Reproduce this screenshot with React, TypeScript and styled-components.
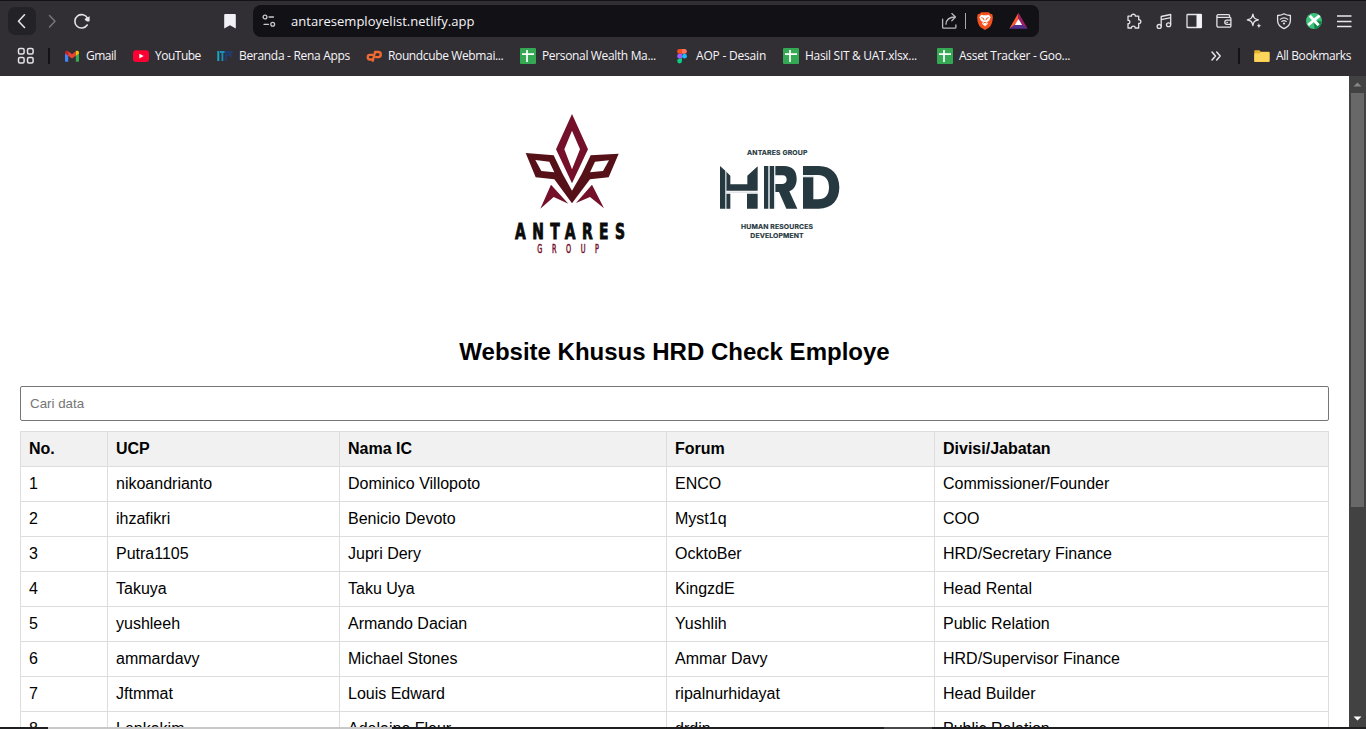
import React from "react";
import styled, { createGlobalStyle } from "styled-components";

const GlobalStyle = createGlobalStyle`
  * { box-sizing: border-box; }
  html, body { margin: 0; padding: 0; overflow: hidden; background: #fff; }
`;

const Window = styled.div`
  width: 1366px;
  height: 729px;
  display: flex;
  flex-direction: column;
  overflow: hidden;
  background: #fff;
  font-family: "Liberation Sans", Arial, sans-serif;
`;

const Chrome = styled.header`
  flex: none;
  height: 76px;
  background: #312f34;
  border-top: 1px solid #131217;
  font-family: "Open Sans", "Noto Sans", sans-serif;
  color: #f6f5f9;
`;

const Toolbar = styled.div`
  display: flex;
  align-items: center;
  height: 40px;
  padding: 0 13px 0 8px;
`;

const NavButton = styled.span<{ $raised?: boolean; $width?: number }>`
  display: flex;
  align-items: center;
  justify-content: center;
  width: ${(p) => p.$width ?? 28}px;
  height: 28px;
  border-radius: 7px;
  background: ${(p) => (p.$raised ? "#232226" : "transparent")};
`;

const BookmarkMark = styled.span`
  display: flex;
  margin-left: 127px;
`;

const AddressBar = styled.div`
  display: flex;
  align-items: center;
  width: 786px;
  height: 32px;
  margin-left: 16px;
  padding: 0 10px 0 8px;
  border-radius: 8px;
  background: #121116;
`;

const Address = styled.span`
  flex: 1;
  margin-left: 14px;
  font-size: 13px;
  line-height: 18px;
  letter-spacing: 0.02px;
  white-space: nowrap;
`;

const AddressDivider = styled.span`
  width: 1px;
  height: 16px;
  margin: 0 10px 0 7px;
  background: #a9a8ad;
`;

const RewardsSlot = styled.span`
  display: flex;
  margin: 0 1px 0 15px;
`;

const Actions = styled.div`
  display: flex;
  gap: 12px;
  margin-left: auto;
`;

const Bookmarks = styled.nav`
  display: flex;
  align-items: center;
  height: 30px;
  padding: 0 14px 0 17px;
`;

const BarDivider = styled.span<{ $left: number; $right: number }>`
  width: 2px;
  height: 16px;
  margin: 0 ${(p) => p.$right}px 0 ${(p) => p.$left}px;
  background: #131217;
`;

const BookmarkList = styled.div`
  display: flex;
  gap: 16px;
`;

const Bookmark = styled.span`
  display: flex;
  align-items: center;
  gap: 6px;
`;

const BookmarkLabel = styled.span<{ $width: number; $track: number }>`
  width: ${(p) => p.$width}px;
  font-size: 12px;
  line-height: 16px;
  letter-spacing: ${(p) => p.$track}px;
  white-space: nowrap;
`;

const Overflow = styled.span`
  display: flex;
  margin-left: auto;
`;

const Viewport = styled.div`
  display: flex;
  flex: none;
  height: 651px;
  overflow: hidden;
`;

const Page = styled.main`
  flex: 1;
  padding: 24px 20px 0;
  overflow: hidden;
`;

const Logos = styled.div`
  display: flex;
  justify-content: center;
  gap: 60px;
  height: 240px;
  padding-left: 11px;
`;

const HrdSlot = styled.div`
  padding-top: 35px;
`;

const Title = styled.h2`
  margin: -2px 0 20px;
  font-size: 24px;
  line-height: 28px;
  font-weight: 700;
  text-align: center;
  color: #000;
`;

const Search = styled.input`
  display: block;
  width: 100%;
  height: 35px;
  margin: 0 0 10px;
  padding: 0 9px;
  border: 1px solid #767676;
  border-radius: 2px;
  font: 13.333px "Liberation Sans", Arial, sans-serif;
  outline: none;
  &::placeholder { color: #757575; }
`;

const Table = styled.table`
  width: 1308px;
  table-layout: fixed;
  border-collapse: collapse;
  font-size: 16px;
  line-height: 18px;
  color: #000;
`;

const Col = styled.col<{ $width: number }>`
  width: ${(p) => p.$width}px;
`;

const HeadCell = styled.th`
  height: 35px;
  padding: 0 8px;
  border: 1px solid #ddd;
  background: #f1f1f1;
  text-align: left;
`;

const Cell = styled.td`
  height: 35px;
  padding: 0 8px;
  border: 1px solid #ddd;
`;

const Scrollbar = styled.div`
  display: flex;
  flex-direction: column;
  align-items: center;
  justify-content: space-between;
  width: 17px;
  background: #424242;
`;

const ScrollArrow = styled.span`
  display: flex;
  align-items: center;
  justify-content: center;
  height: 17px;
`;

const ScrollTrack = styled.div`
  flex: 1;
  width: 13px;
`;

const ScrollThumb = styled.div`
  height: 414px;
  background: #686868;
`;

const Taskbar = styled.footer`
  display: flex;
  height: 2px;
`;

const TaskSegment = styled.span<{ $width: number; $color: string }>`
  width: ${(p) => p.$width}px;
  background: ${(p) => p.$color};
`;

const line = { fill: "none", stroke: "#e4e3e8", strokeWidth: 1.3, strokeLinecap: "round", strokeLinejoin: "round" } as const;

const Sheet = () => (
  <svg width="16" height="16" viewBox="0 0 16 16">
    <rect width="16" height="16" rx="1" fill="#34a853" />
    <path d="M2 6.2h12M7 2v12" stroke="#fff" strokeWidth="1.7" />
  </svg>
);

const Gmail = () => (
  <svg width="16" height="16" viewBox="0 0 16 16">
    <path d="M1 4.5V13a.8.8 0 0 0 .8.8h2.4V7.2Z" fill="#4285f4" />
    <path d="M15 4.5V13a.8.8 0 0 1-.8.8h-2.4V7.2Z" fill="#34a853" />
    <path d="M1 4.6c0-1.8 2-2.4 3.2-1.4v4.5L1 5.4Z" fill="#c5221f" />
    <path d="M4.2 3.2 8 6.2l3.8-3v4.5L8 10.6 4.2 7.7Z" fill="#ea4335" />
    <path d="M15 4.6c0-1.8-2-2.4-3.2-1.4v4.5L15 5.4Z" fill="#fbbc04" />
  </svg>
);

const YouTube = () => (
  <svg width="16" height="16" viewBox="0 0 16 16">
    <rect y="2.3" width="16" height="11.6" rx="3" fill="#ff0033" />
    <path d="m6.3 5.7 4.4 2.4-4.4 2.4Z" fill="#fff" />
  </svg>
);

const Rena = () => (
  <svg width="16" height="16" viewBox="0 0 16 16">
    <path d="M1.3 3v10" stroke="#18a6c4" strokeWidth="2" />
    <path d="M3 4h4.6M5.4 3.500V13" stroke="#1790b8" strokeWidth="1.8" />
    <path d="M8.800 13V4h2c2.400 0 2.400 3.400 0 3.400H9.200M12 4h3.600M13.800 4v5" stroke="#213c72" strokeWidth="1.8" fill="none" />
  </svg>
);

const CPanel = () => (
  <svg width="16" height="16" viewBox="0 0 16 16">
    <path d="M6.600 6.900H4a2.300 2.300 0 0 0 0 4.600h1.500" fill="none" stroke="#f26a32" strokeWidth="2.300" strokeLinecap="round" />
    <path d="M6.800 12.700 9 4h3.200a2.600 2.600 0 0 1 0 5.200H10" fill="none" stroke="#f26a32" strokeWidth="2.300" strokeLinecap="round" strokeLinejoin="round" />
  </svg>
);

const Figma = () => (
  <svg width="16" height="16" viewBox="0 0 16 16">
    <path d="M8 1H5.500a2.400 2.400 0 0 0 0 4.800H8Z" fill="#f24e1e" />
    <path d="M8 1h2.500a2.400 2.400 0 0 1 0 4.800H8Z" fill="#ff7262" />
    <path d="M8 5.800H5.500a2.400 2.400 0 0 0 0 4.800H8Z" fill="#a259ff" />
    <circle cx="10.500" cy="8.200" r="2.400" fill="#1abcfe" />
    <path d="M8 10.600H5.500A2.400 2.400 0 1 0 8 13Z" fill="#0acf83" />
  </svg>
);

const Folder = () => (
  <svg width="16" height="16" viewBox="0 0 16 16">
    <path d="M.3 3.200c0-.7.400-1 1-1h4l1.600 1.500h7.600c.7 0 1 .4 1 1v8.200c0 .7-.4 1-1 1H1.300c-.7 0-1-.4-1-1Z" fill="#e8b32e" />
    <path d="M.3 5.400h5.400l1.500-1.300h7.300c.7 0 1 .4 1 1v7.600c0 .7-.4 1-1 1H1.300c-.7 0-1-.4-1-1Z" fill="#ffd65c" />
  </svg>
);

const bookmarks = [
  { label: "Gmail", width: 31, track: -0.5, icon: <Gmail /> },
  { label: "YouTube", width: 46, track: -0.5, icon: <YouTube /> },
  { label: "Beranda - Rena Apps", width: 111, track: -0.31, icon: <Rena /> },
  { label: "Roundcube Webmai...", width: 116, track: -0.37, icon: <CPanel /> },
  { label: "Personal Wealth Ma...", width: 116, track: -0.35, icon: <Sheet /> },
  { label: "AOP - Desain", width: 71, track: -0.2, icon: <Figma /> },
  { label: "Hasil SIT & UAT.xlsx...", width: 116, track: -0.3, icon: <Sheet /> },
  { label: "Asset Tracker - Goo...", width: 116, track: -0.3, icon: <Sheet /> },
];

const ActionIcons = () => (
  <Actions>
    <svg width="18" height="18" viewBox="0 0 18 18">
      <path {...line} d="M3 4.200h3.500c-.9-2.600 4.600-2.600 3.800 0h3.400v3.600c2.900-.7 2.900 4.300 0 3.600v4.600h-3.600c.5-2.600-4-2.600-3.600 0H3v-4.300c2.500.4 2.500-3.800 0-3.400Z" />
    </svg>
    <svg width="18" height="18" viewBox="0 0 18 18">
      <path {...line} d="M6.200 14V4.500l9.500-2V12M6.200 7.600l9.500-2" />
      <ellipse {...line} cx="4.200" cy="14.400" rx="2.100" ry="1.900" />
      <ellipse {...line} cx="13.600" cy="12.700" rx="2.100" ry="1.900" />
    </svg>
    <svg width="18" height="18" viewBox="0 0 18 18">
      <rect {...line} x="2" y="2.500" width="14.400" height="13" rx=".6" />
      <path d="M11.500 2h5v14h-5Z" fill="#f4f3f8" />
    </svg>
    <svg width="18" height="18" viewBox="0 0 18 18">
      <path {...line} d="M14.600 5.400V3.800c0-.7-.4-1.100-1.100-1.100H3.200c-1.700 0-1.700 2.700 0 2.700h11.400c.8 0 1.300.4 1.300 1.200v7.300c0 .8-.5 1.200-1.300 1.200H3.400c-.9 0-1.500-.5-1.500-1.400V4M15.900 8.200h-4c-2.800 0-2.800 4.200 0 4.200h4M11.800 10.300h.6" />
    </svg>
    <svg width="18" height="18" viewBox="0 0 18 18">
      <path {...line} d="M7.900 2.200c.7 3.800 1.500 4.800 5.500 5.600-4 .8-4.800 1.900-5.500 5.700-.8-3.800-1.700-4.900-5.600-5.700 3.900-.8 4.800-1.800 5.600-5.600Z" />
      <path d="M13.900 11.100c.4 1.900.9 2.300 2.600 2.700-1.700.4-2.200.8-2.600 2.600-.4-1.800-.8-2.200-2.500-2.600 1.700-.4 2.100-.8 2.500-2.700Z" fill="#e4e3e8" />
    </svg>
    <svg width="18" height="18" viewBox="0 0 18 18">
      <path {...line} d="M9 1.800c2 1.200 4 1.600 6.400 1.700v5.100c0 3.800-2.500 6.400-6.400 8.100-3.900-1.700-6.400-4.300-6.400-8.100V3.500C5 3.400 7 3 9 1.800Z" />
      <path {...line} strokeWidth="1.100" d="M5.200 7.400c2.200-1.800 5.400-1.800 7.600 0M6.700 9.500c1.400-1.100 3.200-1.100 4.600 0" />
      <circle cx="9" cy="11.500" r="1.100" fill="#e4e3e8" />
    </svg>
    <svg width="18" height="18" viewBox="0 0 18 18">
      <circle cx="9" cy="9" r="8" fill="#3cc47c" />
      <path d="M9.500 17A8 8 0 0 0 17 9.500L13 8.600 9 12Z" fill="#14864a" />
      <path d="m4.800 3.800 8.800 9.400M14.600 3.600 3.200 13" stroke="#fff" strokeWidth="2.800" />
    </svg>
    <svg width="18" height="18" viewBox="0 0 18 18">
      <path d="M2 4h14.500M2 9.500h14.500M2 14.500h14.500" stroke="#e8e7ec" strokeWidth="1.300" />
    </svg>
  </Actions>
);

const AntaresLogo = () => (
  <svg width="140" height="165" viewBox="0 0 420 495">
    <path fillRule="evenodd" fill="#74102a" d="M216 42 264 148 216 250 168 148ZM216 92 193 148 216 208 240 148Z" />
    <g fill="#551117">
      <path fillRule="evenodd" d="M77 159 161 166 188 222 216 272V310L163 238 107 232ZM106 180 124 213 163 217 148 185Z" />
      <path fillRule="evenodd" d="M356 161 272 166 245 222 216 272V310L270 238 326 232ZM327 181 309 213 270 217 285 185Z" />
    </g>
    <path fill="#74102a" d="M153 254 205 311 161 291 121 326ZM276 254 228 309 270 291 312 325Z" />
    <g fontFamily="DejaVu Sans Condensed, DejaVu Sans, sans-serif">
      <text transform="translate(45 417) scale(.76 1)" textLength="434" lengthAdjust="spacing" fontSize="61" fontWeight="700" fill="#0b0b0b" stroke="#0b0b0b" strokeWidth="2.500">ANTARES</text>
      <text transform="translate(112 459) scale(.62 1)" textLength="298" lengthAdjust="spacing" fontSize="35" fill="#74102a" stroke="#74102a" strokeWidth="1.500">GROUP</text>
    </g>
  </svg>
);

const HrdLogo = () => (
  <svg width="160" height="115" viewBox="0 0 480 345">
    <g fill="#263840" stroke="#263840" strokeWidth=".5" fontFamily="Inter, sans-serif" fontWeight="700" fontSize="20.5">
      <text x="141" y="59" textLength="181">ANTARES GROUP</text>
      <text x="123" y="283" textLength="216">HUMAN RESOURCES</text>
      <text x="151" y="308" textLength="160">DEVELOPMENT</text>
    </g>
    <g fill="#263840">
      <path d="M60 93 76 107V221H60ZM79 110 91 122V148H142V122L173 94V167H79ZM79 176H91V221H79ZM141 176H173V221H141Z" />
      <path d="M192 93H205V221H192ZM209 93H222V221H209Z" />
      <path d="M226 93H252C278 93 290 108 290 132 290 150 282 163 268 169L292 221H259L237 171H226V147H248C264 147 264 121 248 121H226Z" />
      <path d="M309 93H356C396 93 418 119 418 157S396 221 356 221H309V127H340V193H354C377 193 387 179 387 157S377 120 354 120H309Z" />
    </g>
    <path d="M77.500 108V221M207 93V221M224 93V221M79 171.500H173M309 123.500H342" stroke="#b9c2c7" strokeWidth="2" />
  </svg>
);

const columns = [
  { name: "No.", width: 87 },
  { name: "UCP", width: 232 },
  { name: "Nama IC", width: 327 },
  { name: "Forum", width: 268 },
  { name: "Divisi/Jabatan", width: 394 },
];

const employees = [
  ["1", "nikoandrianto", "Dominico Villopoto", "ENCO", "Commissioner/Founder"],
  ["2", "ihzafikri", "Benicio Devoto", "Myst1q", "COO"],
  ["3", "Putra1105", "Jupri Dery", "OcktoBer", "HRD/Secretary Finance"],
  ["4", "Takuya", "Taku Uya", "KingzdE", "Head Rental"],
  ["5", "yushleeh", "Armando Dacian", "Yushlih", "Public Relation"],
  ["6", "ammardavy", "Michael Stones", "Ammar Davy", "HRD/Supervisor Finance"],
  ["7", "Jftmmat", "Louis Edward", "ripalnurhidayat", "Head Builder"],
  ["8", "Lenkakim", "Adelaine Fleur", "drdin", "Public Relation"],
];

export default function App() {
  return (
    <Window>
      <GlobalStyle />
      <Chrome>
        <Toolbar>
          <NavButton $raised>
            <svg width="18" height="18" viewBox="0 0 18 18"><path {...line} strokeWidth="1.600" d="M11.500 2.800 5.500 9.300l6 6.200" /></svg>
          </NavButton>
          <NavButton $width={32}>
            <svg width="18" height="18" viewBox="0 0 18 18"><path {...line} stroke="#77767b" strokeWidth="1.500" d="m6.500 3.500 5.500 5.800-5.500 5.700" /></svg>
          </NavButton>
          <NavButton>
            <svg width="18" height="18" viewBox="0 0 18 18">
              <path {...line} strokeWidth="1.600" d="M14.200 13a6.700 6.700 0 1 1 .4-6.600" />
              <path d="M16.600 4.200v4.500c0 .5-.3.800-.8.800-2 0-3.800-1-4.300-2.600Z" fill="#e4e3e8" />
            </svg>
          </NavButton>
          <BookmarkMark>
            <svg width="14" height="16" viewBox="0 0 14 16"><path d="M1.200 2.200c0-.8.400-1.200 1.200-1.200h9.200c.8 0 1.200.4 1.200 1.200V15.500L7 12.300l-5.800 3.200Z" fill="#f1f0f6" /></svg>
          </BookmarkMark>
          <AddressBar>
            <svg width="16" height="16" viewBox="0 0 16 16">
              <g {...line} stroke="#c9c8cd">
                <circle cx="4" cy="4" r="1.900" /><path d="M8 4h4.500M3 11.300h4.500" /><circle cx="11.700" cy="11.300" r="1.900" />
              </g>
            </svg>
            <Address>antaresemployelist.netlify.app</Address>
            <svg width="17" height="18" viewBox="0 0 17 18">
              <path {...line} stroke="#b9b8bd" d="M1.600 7.200v8c0 .6.300.9.900.9H14c.6 0 .9-.3.900-.9v-2.300M5 12.200c.2-4.400 2.500-7 9.200-7.200M10.800 1.600 14.500 5l-3.700 3.700" />
            </svg>
            <AddressDivider />
            <svg width="18" height="20" viewBox="0 0 18 20">
              <path d="m5.200 1.200 7.600 0 1.700 1.700 1.700.1.700 3.400c-.4 5-1.700 8.400-3.800 10.100L9 19l-4.100-2.500C2.800 14.800 1.500 11.400 1.100 6.400L1.800 3l1.700-.1Z" fill="#f4511e" />
              <path d="m5.200 3.800 2 .4h3.600l2-.4 1.900 2.400-1.600 3.600-2.100 1.300 1 1.700L9 15.300l-3-2.500 1-1.700-2.100-1.300-1.600-3.600Z" fill="#fff" />
              <path d="m5.300 6.700 2.200.7.500 2M12.700 6.700l-2.200.7-.5 2M7.300 12.200 9 11.300l1.700.9" stroke="#f4511e" fill="none" />
            </svg>
            <RewardsSlot>
              <svg width="19" height="18" viewBox="0 0 19 18">
                <path d="M9.500.7.300 16.700 9.500 11Z" fill="#ff5a36" />
                <path d="m9.500.7 9.200 16L9.500 11Z" fill="#9e1f63" />
                <path d="M.3 16.700h18.400L9.500 10Z" fill="#53318f" />
                <path d="m9.500 7 3.600 6.100H5.900Z" fill="#fff" />
              </svg>
            </RewardsSlot>
          </AddressBar>
          <ActionIcons />
        </Toolbar>
        <Bookmarks>
          <svg width="18" height="18" viewBox="0 0 18 18">
            <g {...line} strokeWidth="1.500">
              <rect x="1.500" y="1.500" width="5.600" height="5.600" rx="1.500" /><rect x="10.500" y="1.500" width="5.600" height="5.600" rx="1.500" />
              <rect x="1.500" y="10.500" width="5.600" height="5.600" rx="1.500" /><rect x="10.500" y="10.500" width="5.600" height="5.600" rx="1.500" />
            </g>
          </svg>
          <BarDivider $left={13} $right={14} />
          <BookmarkList>
            {bookmarks.map((b) => (
              <Bookmark key={b.label}>
                {b.icon}
                <BookmarkLabel $width={b.width} $track={b.track}>{b.label}</BookmarkLabel>
              </Bookmark>
            ))}
          </BookmarkList>
          <Overflow>
            <svg width="12" height="12" viewBox="0 0 12 12"><path {...line} strokeWidth="1.500" d="m2 2 3.500 4L2 10M6.700 2l3.500 4-3.500 4" /></svg>
          </Overflow>
          <BarDivider $left={16} $right={14} />
          <Bookmark>
            <Folder />
            <BookmarkLabel $width={76} $track={-0.38}>All Bookmarks</BookmarkLabel>
          </Bookmark>
        </Bookmarks>
      </Chrome>
      <Viewport>
        <Page>
          <Logos>
            <AntaresLogo />
            <HrdSlot><HrdLogo /></HrdSlot>
          </Logos>
          <Title>Website Khusus HRD Check Employe</Title>
          <Search placeholder="Cari data" />
          <Table>
            <colgroup>{columns.map((c) => <Col key={c.name} $width={c.width} />)}</colgroup>
            <thead>
              <tr>{columns.map((c) => <HeadCell key={c.name}>{c.name}</HeadCell>)}</tr>
            </thead>
            <tbody>
              {employees.map((row) => (
                <tr key={row[0]}>{row.map((value, i) => <Cell key={i}>{value}</Cell>)}</tr>
              ))}
            </tbody>
          </Table>
        </Page>
        <Scrollbar>
          <ScrollArrow>
            <svg width="9" height="5" viewBox="0 0 9 5"><path d="M4.500.5 8.500 4.500h-8Z" fill="#868686" /></svg>
          </ScrollArrow>
          <ScrollTrack><ScrollThumb /></ScrollTrack>
          <ScrollArrow>
            <svg width="9" height="5" viewBox="0 0 9 5"><path d="M4.500 4.500.5.500h8Z" fill="#fff" /></svg>
          </ScrollArrow>
        </Scrollbar>
      </Viewport>
      <Taskbar>
        <TaskSegment $width={48} $color="#1f1f21" />
        <TaskSegment $width={344} $color="#c8c8c8" />
        <TaskSegment $width={492} $color="#1f1f21" />
        <TaskSegment $width={48} $color="#48484a" />
        <TaskSegment $width={434} $color="#1f1f21" />
      </Taskbar>
    </Window>
  );
}
